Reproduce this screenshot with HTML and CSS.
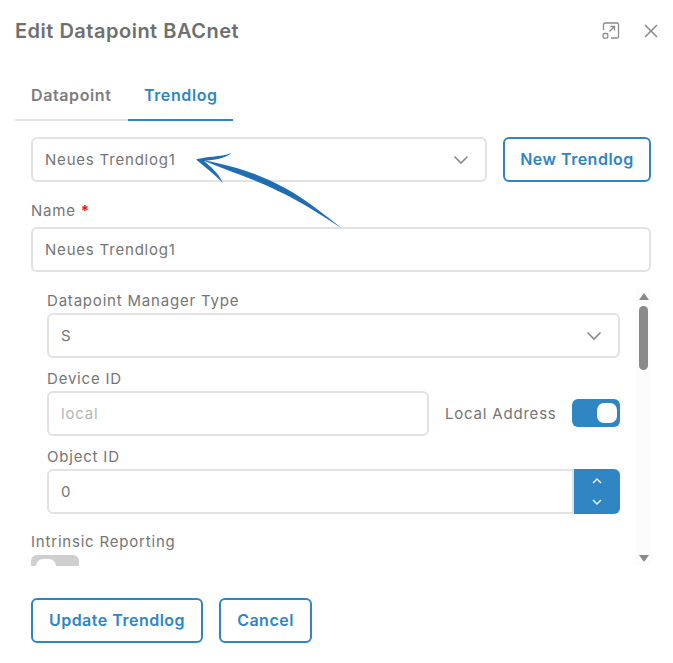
FILE: index.html

```html
<!DOCTYPE html>
<html>
<head>
    <title>Edit Datapoint BACnet</title>
    <meta charset="utf-8">
    <link rel="stylesheet" href="styles.css">
</head>
<body>
    <div class="modal">
        <div class="modal-header">
            <h2 class="modal-title">Edit Datapoint BACnet</h2>
            <div class="modal-actions">
                <svg width="18" height="18" viewBox="0 0 18 18" fill="none" stroke="#8a8a8a" stroke-width="1.300">
                    <path d="M1.500 8V2.500a1.500 1.500 0 0 1 1.500-1.500h12a1.500 1.500 0 0 1 1.500 1.500v12a1.500 1.500 0 0 1-1.500 1.500H9"/>
                    <rect x="1.200" y="11.500" width="4.600" height="4.600" rx="1"/>
                    <path d="M7.500 9.500 12.500 4.500M8.500 4.500h4v4"/>
                </svg>
                <svg width="14" height="14" viewBox="0 0 14 14" fill="none" stroke="#8a8a8a" stroke-width="1.500">
                    <path d="M1 1 13 13M13 1 1 13"/>
                </svg>
            </div>
        </div>

        <div class="tabs">
            <div class="tab">Datapoint</div>
            <div class="tab active">Trendlog</div>
        </div>

        <div class="form">
            <div class="trendlog-row">
                <div class="field grow">
                    <span>Neues Trendlog1</span>
                    <svg class="chevron" width="16" height="10" viewBox="0 0 16 10" fill="none" stroke="#8a8a8a" stroke-width="1.600"><path d="M1.500 1.500 8 8l6.500-6.500"/></svg>
                </div>
                <button class="btn new-btn">New Trendlog</button>
            </div>

            <label class="label name-label">Name <span class="req">*</span></label>
            <div class="field"><span>Neues Trendlog1</span></div>

            <div class="scroll-area">
                <div class="scroll-content">
                    <div class="inner">
                        <label class="label">Datapoint Manager Type</label>
                        <div class="field">
                            <span>S</span>
                            <svg class="chevron" width="16" height="10" viewBox="0 0 16 10" fill="none" stroke="#8a8a8a" stroke-width="1.600"><path d="M1.500 1.500 8 8l6.500-6.500"/></svg>
                        </div>

                        <label class="label spaced">Device ID</label>
                        <div class="device-row">
                            <div class="field device-input"><span class="placeholder">local</span></div>
                            <span class="local-label">Local Address</span>
                            <div class="toggle on"><div class="knob"></div></div>
                        </div>

                        <label class="label spaced">Object ID</label>
                        <div class="number-field">
                            <div class="number-value">0</div>
                            <div class="spinner">
                                <svg width="10" height="6" viewBox="0 0 10 6" fill="none" stroke="#fff" stroke-width="1.400"><path d="M1 5 5 1l4 4"/></svg>
                                <svg width="10" height="6" viewBox="0 0 10 6" fill="none" stroke="#fff" stroke-width="1.400"><path d="M1 1l4 4 4-4"/></svg>
                            </div>
                        </div>
                    </div>
                    <label class="label intrinsic-label">Intrinsic Reporting</label>
                    <div class="toggle off"><div class="knob"></div></div>
                </div>
                <div class="scrollbar">
                    <div class="arrow-up"></div>
                    <div class="track"><div class="thumb"></div></div>
                    <div class="arrow-down"></div>
                </div>
            </div>

            <div class="footer">
                <button class="btn update-btn">Update Trendlog</button>
                <button class="btn cancel-btn">Cancel</button>
            </div>
        </div>

        <!-- annotation arrow drawn on top of the screenshot -->
        <svg class="annotation" width="160" height="90" viewBox="0 0 160 90">
            <path fill="#1f6db3" d="M6 19.500C16 16 30 17.500 41.500 13 35 18.500 24 20 14 21 20 26 28.500 33 33 43 25 35 15 27 6 19.500Z"/>
            <path fill="#1f6db3" d="M12 20C50 27 70 35 95 48 115 59 135 75 152 88.500 128 73 108 60 88 51 62 38 38 31 12 20Z"/>
        </svg>
    </div>
</body>
</html>
```

FILE: styles.css

```css
html, body {
    margin: 0;
    padding: 0;
    background: #fff;
}
body {
    font-family: Inter, "Open Sans", Arial, sans-serif;
    font-size: 15px;
    letter-spacing: 0.8px;
    color: #757575;
}
.modal {
    position: relative;
    width: 673px;
    height: 663px;
    box-sizing: border-box;
    padding: 16px 15px 0 15px;
    overflow: hidden;
}
.modal-header {
    display: flex;
    justify-content: space-between;
    align-items: center;
    height: 30px;
}
.modal-title {
    margin: 0;
    font-size: 20px;
    font-weight: 600;
    letter-spacing: 0.5px;
    color: #6f6f6f;
}
.modal-actions {
    display: flex;
    align-items: center;
    gap: 24px;
}
.tabs {
    display: flex;
    width: 218px;
    margin-top: 31px;
    border-bottom: 2px solid #e6e6e6;
}
.tab {
    height: 44px;
    line-height: 36px;
    width: 113px;
    padding-left: 16px;
    box-sizing: border-box;
    font-size: 16px;
    font-weight: 600;
    letter-spacing: 0.6px;
    margin-bottom: -2px;
    color: #7d7d7d;
}
.tab.active {
    width: 105px;
    color: #3085c3;
    border-bottom: 2px solid #3085c3;
}
.form {
    padding-left: 16px;
    margin-top: 16px;
    width: 620px;
}
.trendlog-row {
    display: flex;
    gap: 16px;
}
.field {
    display: flex;
    justify-content: space-between;
    align-items: center;
    height: 45px;
    box-sizing: border-box;
    border: 2px solid #e2e2e2;
    border-radius: 6px;
    padding: 0 16px 0 12px;
    background: #fff;
}
.field span {
    margin-bottom: 1px;
}
.grow {
    flex: 1;
}
.placeholder {
    color: #b5b5b5;
}
.btn {
    font-family: inherit;
    font-size: 16px;
    font-weight: 600;
    letter-spacing: 0.5px;
    height: 45px;
    box-sizing: border-box;
    border: 2px solid #3085c3;
    border-radius: 6px;
    background: #fff;
    color: #3085c3;
    padding: 0 0 2px;
}
.new-btn {
    width: 148px;
}
.label {
    display: block;
    height: 20px;
    line-height: 18px;
    margin-bottom: 1px;
}
.name-label {
    margin-top: 20px;
    margin-bottom: 5px;
}
.req {
    color: #e8121c;
    font-weight: 700;
}
.scroll-area {
    display: flex;
    height: 278px;
    margin-top: 16px;
}
.scroll-content {
    flex: 1;
    overflow: hidden;
    padding-top: 4px;
    box-sizing: border-box;
}
.inner {
    padding: 0 16px;
}
.spaced {
    margin-top: 12px;
}
.intrinsic-label {
    margin-top: 19px;
    margin-bottom: 2px;
}
.device-row {
    display: flex;
    align-items: center;
}
.device-input {
    width: 382px;
}
.local-label {
    margin-left: 16px;
    flex: 1;
}
.toggle {
    position: relative;
    width: 48px;
    height: 28px;
    border-radius: 6px;
}
.toggle.on {
    background: #3085c3;
    margin-bottom: 1px;
}
.toggle.off {
    background: #cfcfcf;
}
.knob {
    position: absolute;
    top: 4px;
    width: 20px;
    height: 20px;
    border-radius: 7px;
    background: #fff;
}
.on .knob {
    right: 3px;
}
.off .knob {
    left: 5px;
}
.number-field {
    display: flex;
    height: 45px;
}
.number-value {
    flex: 1;
    box-sizing: border-box;
    line-height: 41px;
    padding-left: 12px;
    border: 2px solid #e2e2e2;
    border-radius: 6px 0 0 6px;
}
.spinner {
    width: 46px;
    display: flex;
    flex-direction: column;
    align-items: center;
    justify-content: center;
    gap: 15px;
    background: #3085c3;
    border-radius: 0 6px 6px 0;
}
.scrollbar {
    width: 15px;
    background: #fcfcfc;
    display: flex;
    flex-direction: column;
    align-items: center;
}
.arrow-up, .arrow-down {
    width: 0;
    height: 0;
    border-left: 5px solid transparent;
    border-right: 5px solid transparent;
}
.arrow-up {
    margin-top: 5px;
    border-bottom: 7px solid #8a8a8a;
}
.arrow-down {
    margin-bottom: 4px;
    border-top: 7px solid #8a8a8a;
}
.track {
    flex: 1;
    width: 9px;
}
.thumb {
    margin-top: 6px;
    height: 64px;
    border-radius: 5px;
    background: #8a8a8a;
}
.footer {
    display: flex;
    gap: 16px;
    margin-top: 32px;
}
.update-btn {
    width: 172px;
}
.cancel-btn {
    width: 93px;
}
.annotation {
    position: absolute;
    left: 190px;
    top: 140px;
}
```
